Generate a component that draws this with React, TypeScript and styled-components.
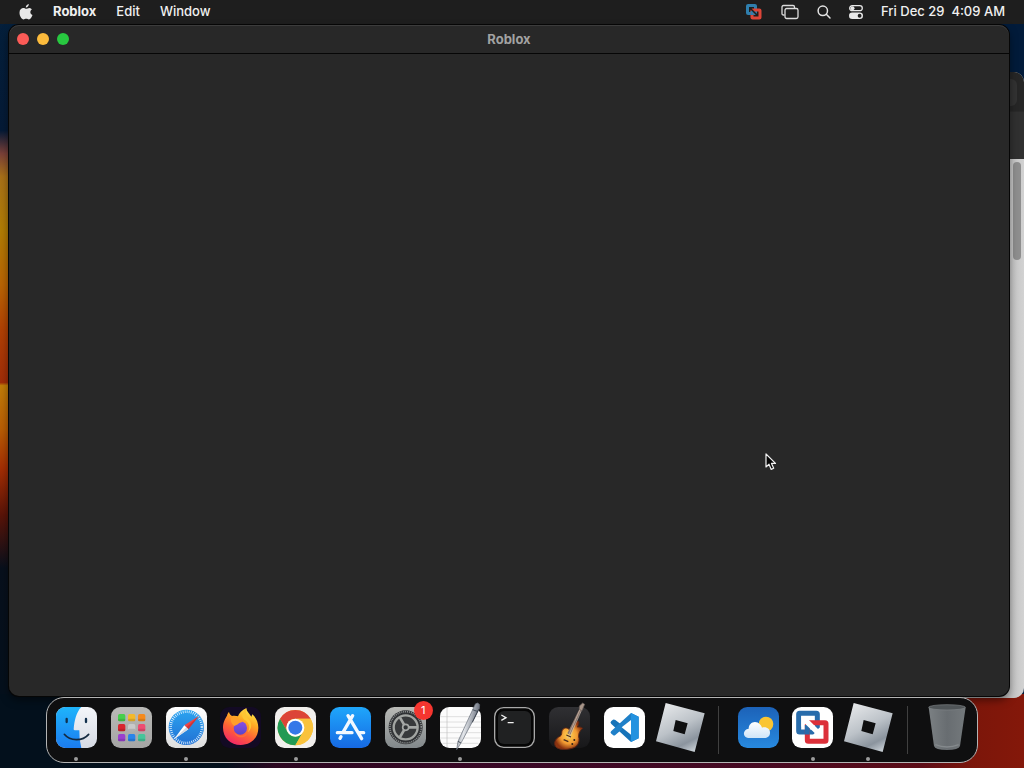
import React from "react";
import styled, { createGlobalStyle } from "styled-components";

const GlobalStyle = createGlobalStyle`
  * { box-sizing: border-box; }
  body {
    margin: 0;
    font-family: Inter, "Liberation Sans", sans-serif;
    font-size: 13px;
    background: #03101c;
  }
  button { font: inherit; color: inherit; background: none; border: 0; padding: 0; }
  svg { display: block; overflow: visible; }
`;

const Desktop = styled.div`
  position: relative;
  display: flex;
  flex-direction: column;
  min-height: 100vh;
  overflow: hidden;
  background:
    linear-gradient(90deg, #03101c 0%, #03101c 22%, #2c0620 27%, #3a0826 50%, #480a22 75%, #5c0c16 90%, #7c160a 95%, #84180a 100%) bottom / 100% 74px no-repeat,
    linear-gradient(180deg, #04203c 0%, #051a36 17%, #7a4038 20%, #a87018 23%, #b07c04 30%, #b86404 37%, #b04004 43%, #a02c08 49.8%, #c07c08 50.2%, #b85c04 56%, #a42e04 61%, #5a1408 67%, #08101c 74%, #03101c 100%) left / 16px 100% no-repeat,
    #021b3a;
`;

const MenuBar = styled.header`
  position: relative;
  display: flex;
  align-items: center;
  justify-content: space-between;
  height: 24px;
  padding: 0 19px;
  background: #1e1e1e;
  color: #f0f0f0;
`;

const MenuGroup = styled.nav<{ $gap: number }>`
  display: flex;
  align-items: center;
  gap: ${(p) => p.$gap}px;
`;

const MenuItem = styled.button<{ $strong?: boolean }>`
  padding-bottom: 2px;
  line-height: 22px;
  font-weight: ${(p) => (p.$strong ? 700 : 450)};
  white-space: pre;
`;

const MenuIcon = styled.button`
  display: block;
`;

const Stage = styled.main`
  position: relative;
  flex: 1;
  min-height: 240px;
`;

const BackWindow = styled.section`
  position: absolute;
  inset: 48px 0 -1px 80px;
  display: flex;
  flex-direction: column;
  overflow: hidden;
  border-radius: 10px;
  background: linear-gradient(90deg, #bdbdbd 98%, #d2d2d2 100%);
`;

const BackToolbar = styled.div`
  height: 87px;
  padding: 7px;
  background: linear-gradient(180deg, #262626 0%, #262626 45%, #303030 46%, #303030 100%);
`;

const BackField = styled.div`
  height: 27px;
  border-radius: 6px;
  background: #323232;
`;

const ScrollThumb = styled.div`
  align-self: flex-end;
  width: 8px;
  height: 98px;
  margin: 3px 3px 0 0;
  border-radius: 4px;
  background: #8e8e8e;
`;

const AppWindow = styled.section`
  position: absolute;
  inset: 1px 15px 1px 9px;
  display: flex;
  flex-direction: column;
  border-radius: 10px;
  background: #282828;
  box-shadow: 0 0 0 1px #060606, inset 0 1px 0 #3c3c3c, 0 4px 8px rgba(0, 0, 0, 0.5);
`;

const TitleBar = styled.header`
  display: grid;
  grid-template-columns: 1fr auto 1fr;
  align-items: center;
  height: 29px;
  padding: 0 8px;
  border-bottom: 1px solid #060606;
`;

const Title = styled.h1`
  margin: 0;
  font-size: 13px;
  line-height: 28px;
  font-weight: 700;
  color: #a2a2a2;
`;

const Lights = styled.div`
  display: flex;
  gap: 8px;
`;

const Light = styled.button<{ $color: string }>`
  width: 12px;
  height: 12px;
  border-radius: 50%;
  background: ${(p) => p.$color};
`;

const DockArea = styled.footer`
  display: flex;
  justify-content: center;
  padding: 0 16px 5px;
`;

const Dock = styled.nav`
  position: relative;
  display: flex;
  width: 100%;
  max-width: 932px;
  height: 66px;
  padding: 0 3px 0 2px;
  border: 1px solid #b4b4b4;
  border-radius: 18px;
  background: #0f0f10;
`;

const DockItem = styled.button`
  position: relative;
  flex: 1 1 0;
  display: flex;
  flex-direction: column;
  align-items: center;
  min-width: 0;
  padding-top: 9px;
`;

const IconBox = styled.span`
  position: relative;
  display: block;
  width: 41px;
  height: 41px;
`;

const Running = styled.span`
  width: 4px;
  height: 4px;
  margin-top: 9px;
  border-radius: 50%;
  background: #9c9c9c;
`;

const Badge = styled.span`
  position: absolute;
  top: -6px;
  right: -7px;
  width: 19px;
  height: 19px;
  border-radius: 50%;
  background: #f5352f;
  color: #fff;
  font-size: 11px;
  line-height: 19px;
  text-align: center;
`;

const Divider = styled.span`
  flex: 0 0 24px;
  display: flex;
  justify-content: center;
  padding: 8px 0;
  &::before {
    content: "";
    width: 1px;
    background: #404040;
  }
`;

const Pointer = styled.svg`
  position: absolute;
  left: 765px;
  top: 453px;
`;

const Art = ({ children }: { children: React.ReactNode }) => (
  <svg width="41" height="41" viewBox="0 0 123 123" aria-hidden="true">{children}</svg>
);

const Tile = ({ fill }: { fill: string }) => (
  <rect width="123" height="123" rx="28" fill={fill} />
);

const Grad = ({ id, from, to }: { id: string; from: string; to: string }) => (
  <linearGradient id={id} x1="0" y1="0" x2="0" y2="1">
    <stop offset="0" stopColor={from} />
    <stop offset="1" stopColor={to} />
  </linearGradient>
);

const FinderIcon = () => (
  <Art>
    <defs>
      <Grad id="fnL" from="#1fb4fb" to="#1b7cf0" />
      <Grad id="fnR" from="#f4f6fa" to="#d6dae4" />
      <clipPath id="fnC"><rect width="123" height="123" rx="28" /></clipPath>
    </defs>
    <g clipPath="url(#fnC)">
      <rect width="123" height="123" fill="url(#fnR)" />
      <path d="M0 0H76C61 16 55 40 53 67Q53 70 57 70H70Q69 98 76 123H0Z" fill="url(#fnL)" />
    </g>
    <path d="M32 36V45M90 36V45" stroke="#12304e" strokeWidth="7" strokeLinecap="round" />
    <path d="M25 82C42 103 80 103 98 82" fill="none" stroke="#14293f" strokeWidth="5" strokeLinecap="round" />
  </Art>
);

const padColors = ["#46cf4c", "#f3b92c", "#f58a1d", "#d8262f", "#c9c9c9", "#ee4c72", "#9a40cf", "#2b84ea", "#45c59a"];
const LaunchpadIcon = () => (
  <Art>
    <defs><Grad id="lpB" from="#b9b9b7" to="#a5a5a4" /></defs>
    <Tile fill="url(#lpB)" />
    {padColors.map((c, i) => (
      <g key={c}>
        <rect x={21 + (i % 3) * 30} y={21 + Math.floor(i / 3) * 30} width="22" height="22" rx="5" fill={c} />
        <rect x={21 + (i % 3) * 30} y={35 + Math.floor(i / 3) * 30} width="22" height="8" rx="4" fill="#000" opacity="0.12" />
      </g>
    ))}
  </Art>
);

const SafariIcon = () => (
  <Art>
    <defs><Grad id="sfT" from="#ffffff" to="#dedede" /><Grad id="sfB" from="#2ba4f0" to="#2271d4" /></defs>
    <Tile fill="url(#sfT)" />
    <circle cx="61" cy="61" r="53" fill="url(#sfB)" />
    <circle cx="61" cy="61" r="47" fill="none" stroke="#e7f5ff" strokeWidth="8" strokeDasharray="2.4 3.75" />
    <path d="M99 27L55 55L67 67Z" fill="#ef4545" />
    <path d="M24 97L55 55L67 67Z" fill="#ffffff" />
    <path d="M99 27L61 61L67 67Z" fill="#b82b32" opacity="0.6" />
    <path d="M24 97L61 61L67 67Z" fill="#d3dae4" />
  </Art>
);

const FirefoxIcon = () => (
  <Art>
    <defs>
      <linearGradient id="ffA" x1="0.8" y1="0" x2="0.3" y2="1">
        <stop offset="0" stopColor="#fff04f" />
        <stop offset="0.35" stopColor="#ffaa23" />
        <stop offset="0.65" stopColor="#ff6137" />
        <stop offset="1" stopColor="#f22668" />
      </linearGradient>
      <Grad id="ffP" from="#8a4fe6" to="#5a45ca" />
    </defs>
    <rect width="123" height="123" rx="28" fill="#130a24" />
    <g transform="translate(-1 0)">
      <path d="M28 15C29 21 33 24 37 27C43 25 50 26 55 28C58 19 67 9 80 4C81 14 88 18 95 29L98 22C109 31 116 46 116 62C116 93 94 114 63 114C33 114 10 92 10 62C10 45 17 34 22 26C23 21 26 17 28 15Z" fill="url(#ffA)" />
      <circle cx="62" cy="63" r="20" fill="url(#ffP)" />
      <path d="M34 34C44 27 53 31 57 38C66 37 70 39 70 42C67 47 59 46 56 50C53 53 47 54 44 57C37 53 32 43 34 34Z" fill="#ff9f2a" />
      <path d="M74 38C89 46 93 62 84 76C97 66 98 49 88 38C80 29 77 20 80 4C68 12 62 28 74 38Z" fill="#ffc533" />
      <path d="M44 76C56 91 76 88 84 76C84 94 48 98 44 76Z" fill="#ff6d38" />
    </g>
  </Art>
);

const ChromeIcon = () => (
  <Art>
    <Tile fill="#f1efed" />
    <circle cx="61" cy="62" r="53" fill="#f6c142" />
    <path d="M15 35.500A53 53 0 0 1 107 35.500H61A26.500 26.500 0 0 0 38 75.300Z" fill="#dc4437" />
    <path d="M15 35.500A53 53 0 0 0 61 115L84 75.300A26.500 26.500 0 0 1 38 75.300Z" fill="#229a54" />
    <path d="M107 35.500A53 53 0 0 1 61 115L84 75.300A26.500 26.500 0 0 0 61 35.500Z" fill="#f9c23c" />
    <circle cx="61" cy="62" r="27" fill="#fff" />
    <circle cx="61" cy="62" r="21" fill="#3478e8" />
  </Art>
);

const AppStoreIcon = () => (
  <Art>
    <defs><Grad id="asB" from="#1fa7fb" to="#1669e4" /></defs>
    <Tile fill="url(#asB)" />
    <path d="M68 26L39 76M54 26L95 95M22 77H66M86 77H101M33 89L30 94" stroke="#f2f8ff" strokeWidth="10" strokeLinecap="round" />
  </Art>
);

const SettingsIcon = () => (
  <Art>
    <defs><Grad id="stB" from="#b9bab6" to="#82888b" /></defs>
    <Tile fill="url(#stB)" />
    <circle cx="62" cy="61" r="51" fill="#303235" />
    <circle cx="62" cy="61" r="47" fill="none" stroke="#8d9090" strokeWidth="5" strokeDasharray="3 2.9" />
    <circle cx="62" cy="61" r="36" fill="#37393b" stroke="#a2a5a2" strokeWidth="7" />
    <path d="M62 61H96M62 61L45 32M62 61L45 90" stroke="#a4a7a5" strokeWidth="8" />
    <circle cx="62" cy="61" r="9" fill="#313436" stroke="#a5a8a6" strokeWidth="5" />
  </Art>
);

const TextEditIcon = () => (
  <Art>
    <defs>
      <linearGradient id="tePen" x1="0" y1="0" x2="1" y2="0.3">
        <stop offset="0" stopColor="#5c6470" /><stop offset="0.45" stopColor="#e4e7eb" /><stop offset="1" stopColor="#5b6270" />
      </linearGradient>
    </defs>
    <Tile fill="#fcfcfc" />
    <path d="M0 29H123M0 45H123M0 61H123M0 77H123M0 93H123M8 109H115" stroke="#d0d0d0" strokeWidth="2" />
    <path d="M21 2V121" stroke="#c0c0c0" strokeWidth="2" />
    <path d="M106 -9Q113 -16 119 -7L118 5L63 108L50 128L54 103Z" fill="url(#tePen)" stroke="#626a75" strokeWidth="2" />
    <path d="M98 8L114 14M54 103L63 108" stroke="#4b535e" strokeWidth="3" />
    <path d="M116 7L97 46" stroke="#39414c" strokeWidth="3" />
  </Art>
);

const TerminalIcon = () => (
  <Art>
    <rect x="2" y="2" width="119" height="119" rx="27" fill="#050505" stroke="#a9a9a9" strokeWidth="4" />
    <rect x="12" y="12" width="99" height="99" rx="18" fill="#202122" />
    <path d="M22 24L36 32L22 40M41 47H59" fill="none" stroke="#f2f2f2" strokeWidth="4" />
  </Art>
);

const GarageIcon = () => (
  <Art>
    <defs>
      <Grad id="gbT" from="#303033" to="#171719" />
      <radialGradient id="gbG"><stop offset="0" stopColor="#ffd452" /><stop offset="0.6" stopColor="#f29a32" /><stop offset="1" stopColor="#8b3310" /></radialGradient>
    </defs>
    <Tile fill="url(#gbT)" />
    <path d="M46 64C54 60 62 67 64 73C70 65 73 48 86 42C92 43 89 54 85 60C91 60 96 59 101 64C91 72 87 83 90 94C92 109 83 121 69 124C54 129 34 129 23 122C11 112 18 94 33 88C43 83 33 70 46 64Z" fill="url(#gbG)" stroke="#5a2414" strokeWidth="3" />
    <path d="M93 2L98 6L64 84L55 79Z" fill="#8d7568" />
    <path d="M95 3L55 94M99 6L60 96" stroke="#cdbfb5" strokeWidth="2" />
    <path d="M91 -3L101 -12L107 -8L99 11L91 7Z" fill="#a89588" stroke="#635a57" strokeWidth="2" />
    <path d="M52 84L66 90M44 98L58 104" stroke="#4a2c1f" strokeWidth="4" />
    <circle cx="76" cy="99" r="3" fill="#302018" /><circle cx="70" cy="111" r="3" fill="#302018" />
  </Art>
);

const CodeIcon = () => (
  <Art>
    <Tile fill="#fff" />
    <path d="M81 18L104 29V94L81 105L22 51Q17 46 22 42L27 38Q30 36 34 39L104 92L81 105V18Z" fill="#1673b9" />
    <path d="M22 80Q17 76 22 72L81 18L85 40L34 84Q30 87 27 84Z" fill="#1f80c8" />
    <path d="M81 39V83L53 61Z" fill="#fff" />
    <path d="M81 18L104 29V94L81 105Z" fill="#2392e0" />
  </Art>
);

const RobloxIcon = ({ id }: { id: string }) => (
  <Art>
    <defs>
      <linearGradient id={id} x1="0.2" y1="0" x2="0.7" y2="1">
        <stop offset="0" stopColor="#e6e8ea" /><stop offset="0.5" stopColor="#bcc2c8" /><stop offset="0.82" stopColor="#8b949e" /><stop offset="1" stopColor="#c3cad0" />
      </linearGradient>
    </defs>
    <path fillRule="evenodd" d="M20 -12L137 19L107 135L-9 103ZM50 39L86 49L77 82L43 72Z" fill={`url(#${id})`} />
  </Art>
);

const WeatherIcon = () => (
  <Art>
    <defs><Grad id="weB" from="#1c62b8" to="#2789df" /><Grad id="weC" from="#ffffff" to="#cfe5f8" /></defs>
    <Tile fill="url(#weB)" />
    <circle cx="84" cy="51" r="22" fill="#fac532" />
    <path d="M35 93C12 93 13 67 32 65C32 48 52 37 67 53C70 56 71 59 72 62C86 58 96 66 96 77C96 88 88 93 79 93Z" fill="url(#weC)" />
  </Art>
);

const VmwareIcon = () => (
  <Art>
    <Tile fill="#fff" />
    <rect x="20" y="19" width="56" height="56" rx="3" fill="none" stroke="#286cab" strokeWidth="15" />
    <rect x="46" y="47" width="56" height="56" rx="3" fill="none" stroke="#dc303a" strokeWidth="15" />
    <path d="M46 54V75H53" fill="none" stroke="#286cab" strokeWidth="15" />
    <path d="M28 27H55L47 35L78 66L88 58V90H58L68 78L39 50L28 60Z" fill="#fff" />
  </Art>
);

const TrashIcon = () => (
  <Art>
    <defs>
      <linearGradient id="trB" x1="0" y1="0" x2="1" y2="0">
        <stop offset="0" stopColor="#7b8083" /><stop offset="0.5" stopColor="#686d71" /><stop offset="1" stopColor="#74797c" />
      </linearGradient>
    </defs>
    <path d="M8 1L24 117Q27 129 63 129Q98 129 102 117L119 1Z" fill="url(#trB)" />
    <ellipse cx="63" cy="1" rx="55" ry="8" fill="#505558" stroke="#7e8386" strokeWidth="2" />
    <path d="M28 113Q63 127 98 113" fill="none" stroke="#858a8d" strokeWidth="4" />
  </Art>
);

type AppEntry = { name: string; icon: React.ReactNode; running?: boolean; badge?: number };

const apps: AppEntry[] = [
  { name: "Finder", icon: <FinderIcon />, running: true },
  { name: "Launchpad", icon: <LaunchpadIcon /> },
  { name: "Safari", icon: <SafariIcon />, running: true },
  { name: "Firefox", icon: <FirefoxIcon /> },
  { name: "Chrome", icon: <ChromeIcon />, running: true },
  { name: "App Store", icon: <AppStoreIcon /> },
  { name: "System Settings", icon: <SettingsIcon />, badge: 1 },
  { name: "TextEdit", icon: <TextEditIcon />, running: true },
  { name: "Terminal", icon: <TerminalIcon /> },
  { name: "GarageBand", icon: <GarageIcon /> },
  { name: "Visual Studio Code", icon: <CodeIcon /> },
  { name: "Roblox", icon: <RobloxIcon id="rbA" /> },
];

const recents: AppEntry[] = [
  { name: "Weather", icon: <WeatherIcon /> },
  { name: "VMware", icon: <VmwareIcon />, running: true },
  { name: "Roblox Player", icon: <RobloxIcon id="rbB" />, running: true },
];

const DockApp = ({ name, icon, running, badge }: AppEntry) => (
  <DockItem aria-label={name}>
    <IconBox>
      {icon}
      {badge && <Badge>{badge}</Badge>}
    </IconBox>
    {running && <Running />}
  </DockItem>
);

export default function App() {
  return (
    <Desktop>
      <GlobalStyle />
      <MenuBar>
        <MenuGroup $gap={20} aria-label="Application menu">
          <MenuIcon aria-label="Apple menu">
            <svg width="14" height="16" viewBox="0 0 14 16" fill="#e8e8e8">
              <path d="M9.800 0C10 1.700 8.500 3.600 6.800 3.500C6.700 1.900 8.200 0.200 9.800 0ZM12.900 5.500C10.600 6.900 11 10 13.500 11C12.800 12.900 11.500 15.400 9.900 15.400C8.800 15.400 8.500 14.700 7.200 14.700C5.900 14.700 5.500 15.400 4.500 15.400C2.700 15.400 0.500 12 0.500 8.700C0.500 5.500 2.500 4 4.400 4C5.600 4 6.600 4.800 7.300 4.800C8 4.800 9.100 3.900 10.500 3.900C11.500 4 12.400 4.500 12.900 5.500Z" />
            </svg>
          </MenuIcon>
          <MenuItem $strong>Roblox</MenuItem>
          <MenuItem>Edit</MenuItem>
          <MenuItem>Window</MenuItem>
        </MenuGroup>
        <MenuGroup $gap={18} aria-label="Status menu">
          <MenuIcon aria-label="VMware Tools">
            <svg width="18" height="16" viewBox="0 0 18 16" fill="none" strokeWidth="3">
              <rect x="2.500" y="1.500" width="8" height="8" rx="0.600" stroke="#2f7fae" />
              <rect x="7" y="6" width="8" height="8" rx="0.600" stroke="#dc4538" />
              <path d="M7 7V9.500H8.500" stroke="#2f7fae" />
              <path d="M4.500 3.500L12 11" stroke="#1e1e1e" strokeWidth="1.500" />
            </svg>
          </MenuIcon>
          <MenuIcon aria-label="Stage">
            <svg width="18" height="16" viewBox="0 0 18 16" fill="none" stroke="#dcdcdc" strokeWidth="1.3">
              <path d="M3.500 11H2.500Q1 11 1 9.500V3Q1 1.500 2.500 1.500H12Q13.500 1.500 13.500 3V4" />
              <rect x="4" y="4.500" width="13" height="10" rx="1.700" />
            </svg>
          </MenuIcon>
          <MenuIcon aria-label="Search">
            <svg width="14" height="14" viewBox="0 0 14 14" fill="none" stroke="#e4e4e4" strokeWidth="1.500" strokeLinecap="round">
              <circle cx="5.800" cy="5.800" r="4.700" /><path d="M9.300 9.300L13 13" />
            </svg>
          </MenuIcon>
          <MenuIcon aria-label="Control Center">
            <svg width="14" height="14" viewBox="0 0 14 14">
              <rect x="0.700" y="0.700" width="12.600" height="5" rx="2.500" fill="none" stroke="#e8e8e8" strokeWidth="1.300" />
              <circle cx="3.500" cy="3.200" r="2" fill="#e8e8e8" />
              <rect x="0" y="7.500" width="14" height="6.500" rx="3.250" fill="#e8e8e8" />
              <circle cx="10.600" cy="10.750" r="1.900" fill="#1e1e1e" />
            </svg>
          </MenuIcon>
          <MenuItem>{"Fri Dec 29  4:09 AM"}</MenuItem>
        </MenuGroup>
      </MenuBar>
      <Stage>
        <BackWindow aria-hidden="true">
          <BackToolbar><BackField /></BackToolbar>
          <ScrollThumb />
        </BackWindow>
        <AppWindow>
          <TitleBar>
            <Lights>
              <Light $color="#fc5b57" aria-label="Close" />
              <Light $color="#fcbb3c" aria-label="Minimize" />
              <Light $color="#28c840" aria-label="Zoom" />
            </Lights>
            <Title>Roblox</Title>
          </TitleBar>
        </AppWindow>
      </Stage>
      <DockArea>
        <Dock aria-label="Dock">
          {apps.map((a) => <DockApp key={a.name} {...a} />)}
          <Divider />
          {recents.map((a) => <DockApp key={a.name} {...a} />)}
          <Divider />
          <DockApp name="Trash" icon={<TrashIcon />} />
        </Dock>
      </DockArea>
      <Pointer width="12" height="18" viewBox="0 0 12 18" aria-hidden="true">
        <path d="M1 1V14L4 11.200L6.200 16.400L8.700 15.300L6.500 10.400H10.500Z" fill="#060606" stroke="#f2f2f2" strokeWidth="1.200" strokeLinejoin="round" />
      </Pointer>
    </Desktop>
  );
}
